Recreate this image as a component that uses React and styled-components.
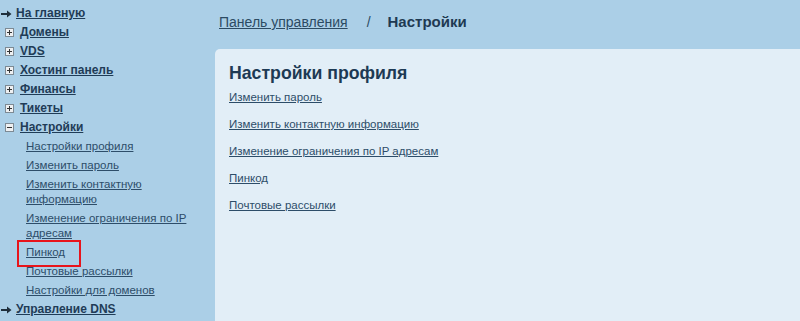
import styled, { createGlobalStyle } from "styled-components";

const GlobalStyle = createGlobalStyle`
  html, body {
    margin: 0;
    padding: 0;
    background: #abcfe7;
    font-family: "Liberation Sans", Arial, sans-serif;
    color: #1f3c55;
  }
`;

const Page = styled.div`
  display: flex;
  width: 800px;
  height: 321px;
  overflow: hidden;
`;

const Sidebar = styled.div`
  width: 215px;
  flex-shrink: 0;
  padding: 4px 0 0 1px;
  box-sizing: border-box;
`;

const NavItem = styled.div`
  display: flex;
  align-items: center;
  padding: 2px 0;
  line-height: 15px;
  font-size: 12px;
  font-weight: bold;
`;

const NavLink = styled.a`
  color: #1f3c57;
  text-decoration: underline;
  margin-left: ${(p) => (p.$arrow ? "4px" : "6px")};
`;

const Box = styled.span`
  width: 7px;
  height: 7px;
  margin-left: 4px;
  border: 1px solid #7d8a94;
  background: #eef0f2;
  position: relative;
  flex-shrink: 0;
  &::before {
    content: "";
    position: absolute;
    left: 1px;
    top: 3px;
    width: 5px;
    height: 1px;
    background: #333;
  }
  &::after {
    content: "";
    position: absolute;
    left: 3px;
    top: 1px;
    width: 1px;
    height: 5px;
    background: #333;
    display: ${(p) => (p.$open ? "none" : "block")};
  }
`;

const SubItem = styled.div`
  padding: 2px 0 2px 25px;
  line-height: 15px;
  font-size: 11.5px;
`;

const SubText = styled.span`
  display: inline-block;
  max-width: 172px;
`;

const SubLink = styled.a`
  color: #2d4d69;
  text-decoration: underline;
  position: relative;
  ${(p) =>
    p.$marked &&
    `
    &::after {
      content: "";
      position: absolute;
      left: -9px;
      top: -6px;
      width: 64px;
      height: 27px;
      box-sizing: border-box;
      border: 2px solid #e8141b;
    }
  `}
`;

const Main = styled.div`
  flex: 1;
  display: flex;
  flex-direction: column;
`;

const Crumbs = styled.div`
  height: 49px;
  box-sizing: border-box;
  padding: 12px 0 0 4px;
  font-size: 14px;
  line-height: 19px;
  display: flex;
  align-items: baseline;
`;

const CrumbLink = styled.a`
  color: #2c4b63;
  text-decoration: underline;
`;

const Sep = styled.span`
  color: #2c4b63;
  margin: 0 17px 0 19px;
`;

const CrumbCurrent = styled.span`
  font-size: 15px;
  font-weight: bold;
  color: #1f3a52;
`;

const Panel = styled.div`
  flex: 1;
  background: #e2eef7;
  border-top-left-radius: 5px;
  padding: 13px 14px;
`;

const Title = styled.h2`
  margin: 0 0 6px;
  font-size: 17.7px;
  line-height: 22px;
  font-weight: bold;
  color: #1d3a54;
`;

const LinkList = styled.div`
  display: flex;
  flex-direction: column;
  align-items: flex-start;
  gap: 13px;
  font-size: 11.5px;
  line-height: 14px;
`;

const PanelLink = styled.a`
  color: #2d4d69;
  text-decoration: underline;
`;

const Arrow = () => (
  <svg width="11" height="8" viewBox="0 0 11 8">
    <path d="M0 3h6V0.5L10.5 4 6 7.5V5H0z" fill="#1f2f3c" />
  </svg>
);

const topItems = ["Домены", "VDS", "Хостинг панель", "Финансы", "Тикеты"];

const subItems = [
  "Настройки профиля",
  "Изменить пароль",
  "Изменить контактную информацию",
  "Изменение ограничения по IP адресам",
  "Пинкод",
  "Почтовые рассылки",
  "Настройки для доменов",
];

const panelLinks = [
  "Изменить пароль",
  "Изменить контактную информацию",
  "Изменение ограничения по IP адресам",
  "Пинкод",
  "Почтовые рассылки",
];

const App = () => {
  return (
    <>
      <GlobalStyle />
      <Page>
        <Sidebar>
          <NavItem>
            <Arrow />
            <NavLink $arrow>На главную</NavLink>
          </NavItem>
          {topItems.map((t) => (
            <NavItem key={t}>
              <Box />
              <NavLink>{t}</NavLink>
            </NavItem>
          ))}
          <NavItem>
            <Box $open />
            <NavLink>Настройки</NavLink>
          </NavItem>
          {subItems.map((t) => (
            <SubItem key={t}>
              <SubText>
                <SubLink $marked={t === "Пинкод"}>{t}</SubLink>
              </SubText>
            </SubItem>
          ))}
          <NavItem>
            <Arrow />
            <NavLink $arrow>Управление DNS</NavLink>
          </NavItem>
        </Sidebar>
        <Main>
          <Crumbs>
            <CrumbLink>Панель управления</CrumbLink>
            <Sep>/</Sep>
            <CrumbCurrent>Настройки</CrumbCurrent>
          </Crumbs>
          <Panel>
            <Title>Настройки профиля</Title>
            <LinkList>
              {panelLinks.map((t) => (
                <PanelLink key={t}>{t}</PanelLink>
              ))}
            </LinkList>
          </Panel>
        </Main>
      </Page>
    </>
  );
};

export default App;
